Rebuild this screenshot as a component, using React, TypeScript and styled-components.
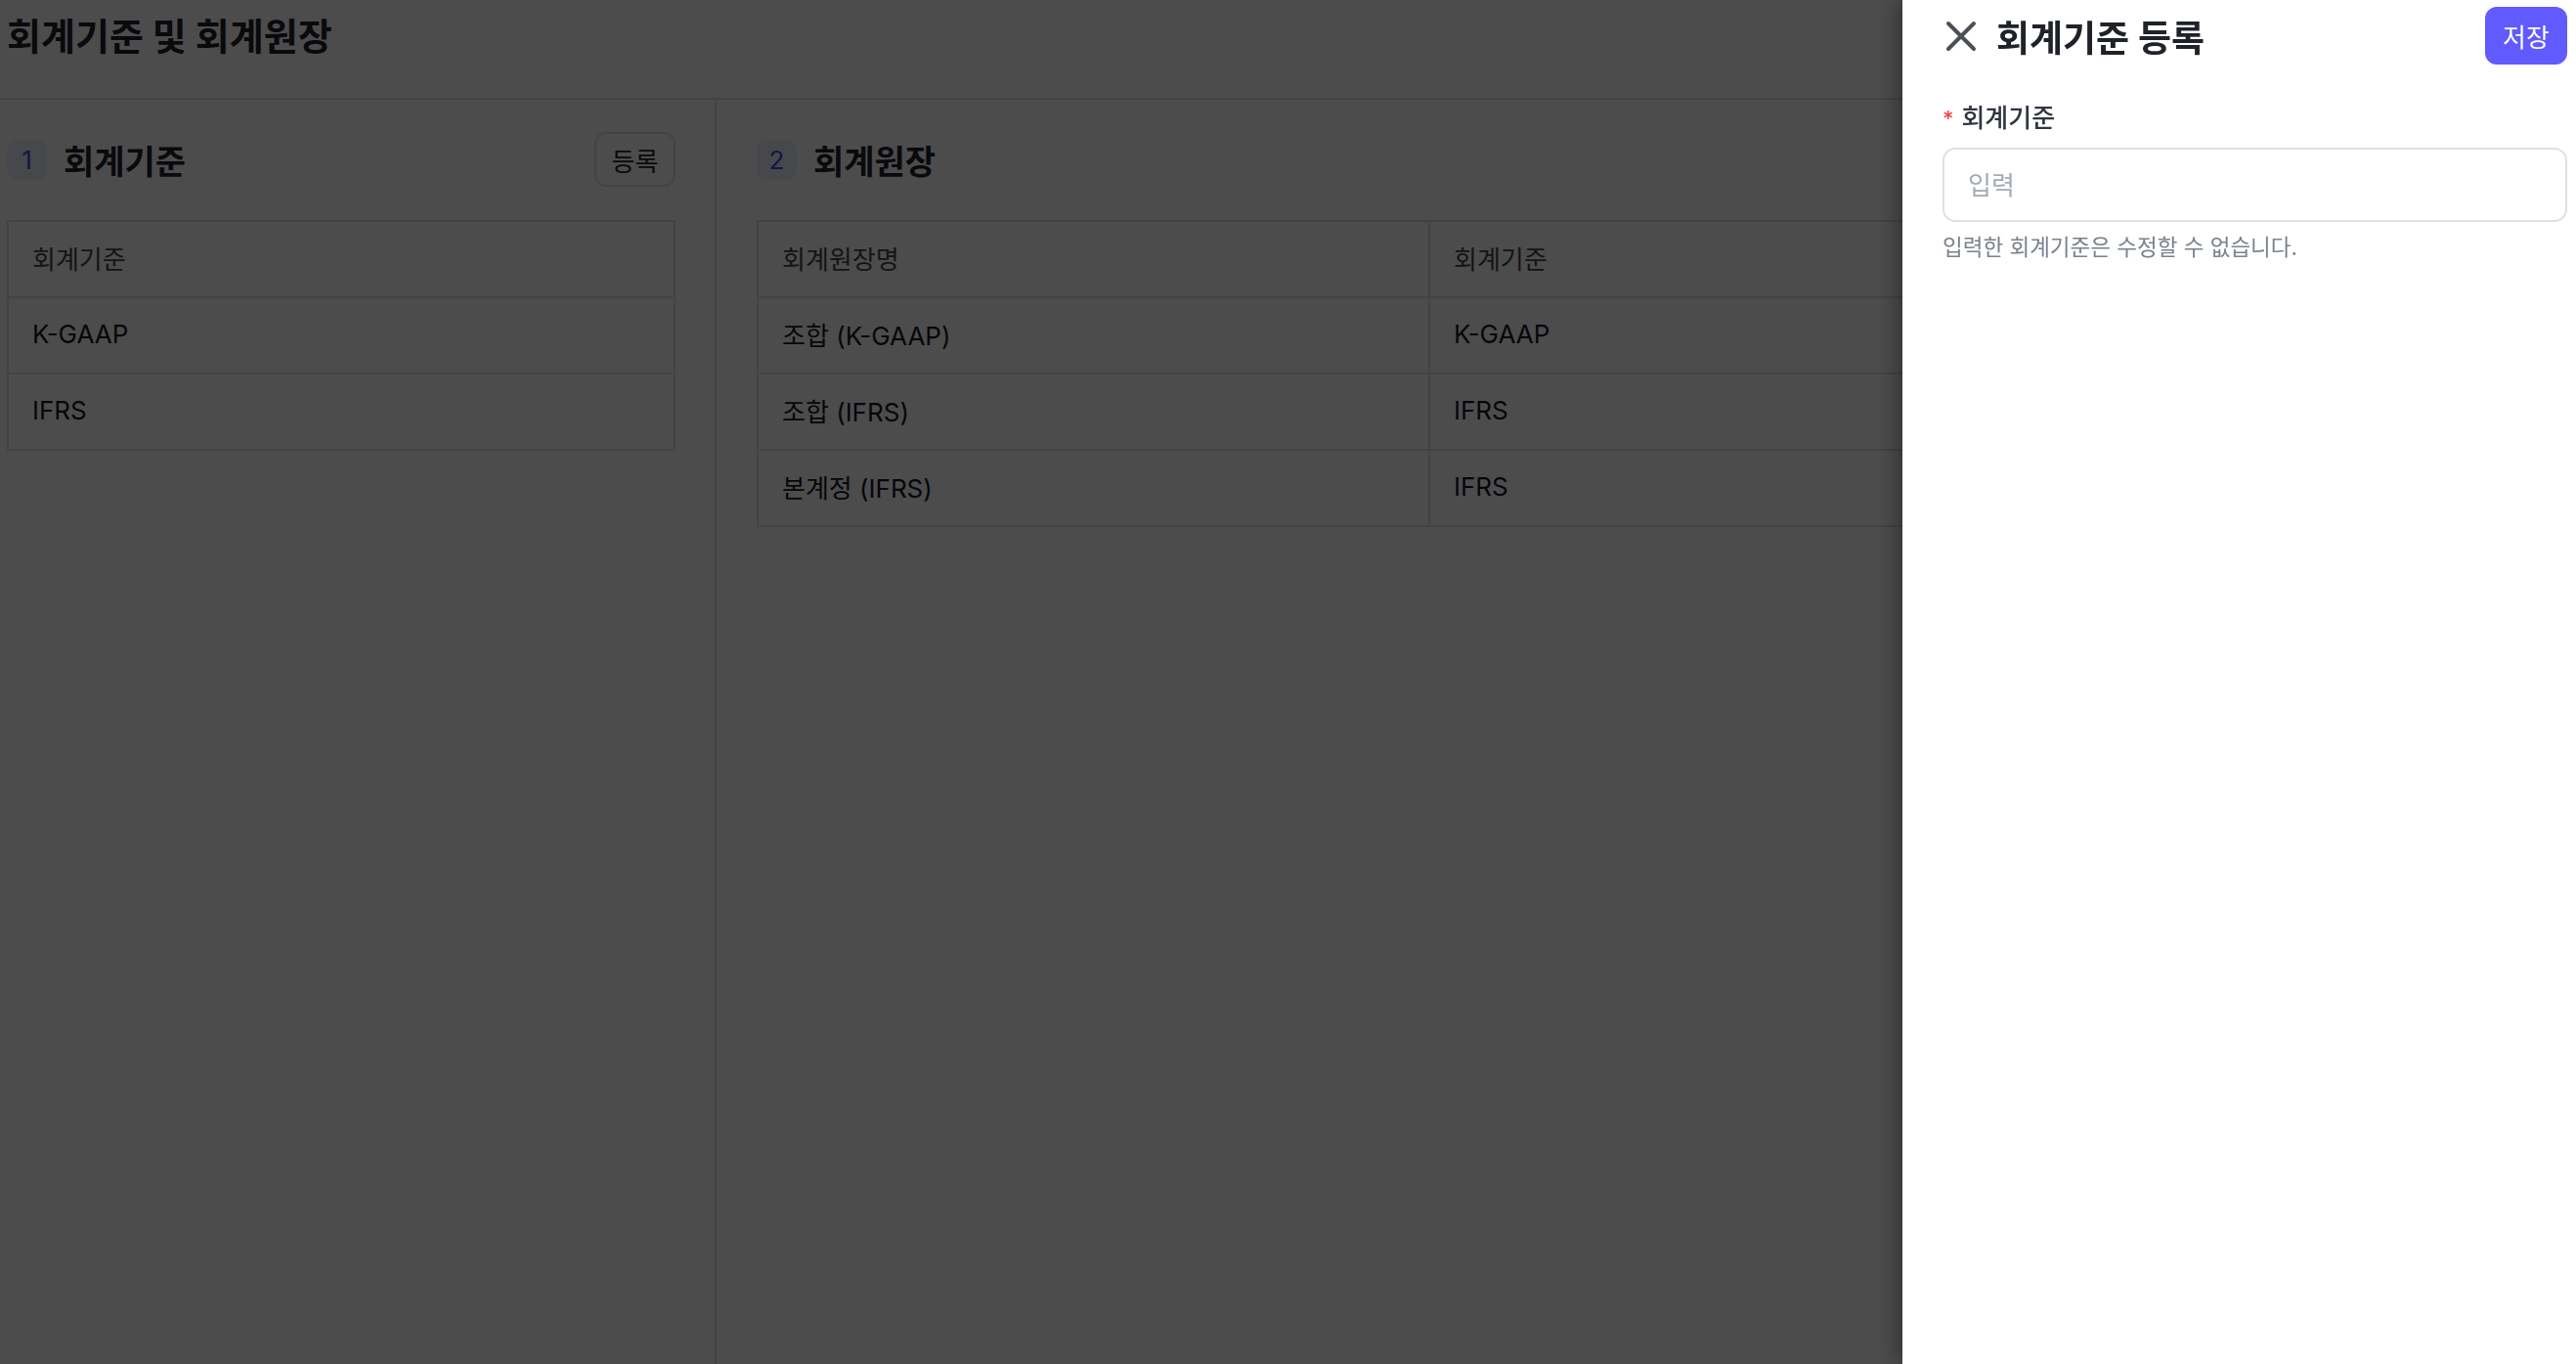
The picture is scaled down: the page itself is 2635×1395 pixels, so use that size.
import * as React from 'react'
import styled, { createGlobalStyle } from 'styled-components'

const GlobalStyle = createGlobalStyle`
  html, body {
    margin: 0;
    padding: 0;
    height: 100%;
    overflow: hidden;
    background: #ffffff;
  }
  body {
    font-family: Inter, 'Noto Sans CJK KR', sans-serif;
    color: #111827;
  }
  * {
    box-sizing: border-box;
  }
`

const Page = styled.div`
  height: 100vh;
  display: flex;
  flex-direction: column;
`

const Header = styled.header`
  height: 102px;
  padding: 15px 7px 0;
  border-bottom: 2px solid #dcdfe4;
  flex-shrink: 0;
`

const PageTitle = styled.h1`
  margin: 0;
  font-size: 38px;
  line-height: 44px;
  font-weight: 700;
  color: #1f2329;
`

const Body = styled.div`
  flex: 1;
  display: flex;
  padding-left: 7px;
`

const Panel = styled.section<{ $first?: boolean; $width?: string }>`
  width: ${p => p.$width || 'auto'};
  flex: ${p => (p.$first ? '0 0 auto' : '1')};
  padding: ${p => (p.$first ? '33px 40px 0 0' : '33px 7px 0 41px')};
  border-right: ${p => (p.$first ? '2px solid #dcdfe4' : 'none')};
`

const PanelHead = styled.div`
  height: 56px;
  display: flex;
  align-items: center;
  justify-content: space-between;
  margin-bottom: 34px;
`

const PanelTitleWrap = styled.div`
  display: flex;
  align-items: center;
  gap: 17px;
`

const Badge = styled.span`
  width: 41px;
  height: 41px;
  border-radius: 10px;
  background: #eef0ff;
  color: #4f46e5;
  font-size: 26px;
  display: flex;
  align-items: center;
  justify-content: center;
`

const PanelTitle = styled.h2`
  margin: 0;
  font-size: 34px;
  font-weight: 700;
  color: #1f2329;
`

const GhostButton = styled.button`
  width: 83px;
  height: 56px;
  border: 2px solid #dcdfe4;
  border-radius: 12px;
  background: #ffffff;
  font-family: inherit;
  font-size: 26px;
  color: #1f2329;
`

const Table = styled.div<{ $cols: string }>`
  display: grid;
  grid-template-columns: ${p => p.$cols};
  border: 2px solid #dcdfe4;
  border-bottom: none;
`

const Cell = styled.div<{ $head?: boolean; $divider?: boolean }>`
  height: 78px;
  display: flex;
  align-items: center;
  padding: 0 0 3px 24px;
  border-bottom: 2px solid #dcdfe4;
  border-right: ${p => (p.$divider ? '2px solid #dcdfe4' : 'none')};
  font-size: 26px;
  color: ${p => (p.$head ? '#3f4650' : '#111827')};
`

const Overlay = styled.div`
  position: fixed;
  inset: 0;
  background: rgba(0, 0, 0, 0.7);
`

const Drawer = styled.aside`
  position: fixed;
  top: 0;
  right: 0;
  width: 689px;
  height: 100vh;
  background: #ffffff;
  padding: 7px 9px 0 41px;
  box-shadow: -6px 0 22px rgba(0, 0, 0, 0.35);
`

const DrawerHead = styled.div`
  height: 59px;
  display: flex;
  align-items: center;
  justify-content: space-between;
`

const DrawerTitleWrap = styled.div`
  display: flex;
  align-items: center;
  gap: 17px;
`

const CloseButton = styled.button`
  width: 38px;
  height: 38px;
  padding: 0;
  border: none;
  background: none;
  display: flex;
  align-items: center;
  justify-content: center;
`

const DrawerTitle = styled.h2`
  margin: 0;
  font-size: 37px;
  font-weight: 700;
  color: #1f2329;
`

const PrimaryButton = styled.button`
  width: 84px;
  height: 59px;
  border: none;
  border-radius: 12px;
  background: #615aff;
  color: #ffffff;
  font-family: inherit;
  font-size: 26px;
`

const Field = styled.div`
  margin-top: 37px;
  display: flex;
  flex-direction: column;
`

const Label = styled.label`
  display: flex;
  align-items: center;
  gap: 8px;
  font-size: 26px;
  line-height: 36px;
  font-weight: 500;
  color: #2f3640;
`

const Required = styled.span`
  color: #ef4444;
  font-size: 22px;
`

const Input = styled.input`
  margin-top: 12px;
  height: 76px;
  width: 100%;
  border: 2px solid #dde1e6;
  border-radius: 13px;
  padding: 0 24px;
  font-family: inherit;
  font-size: 26px;
  color: #111827;
  outline: none;
  &::placeholder {
    color: #a3abb6;
  }
`

const Helper = styled.p`
  margin: 11px 0 0;
  font-size: 22.5px;
  line-height: 30px;
  color: #7a828c;
`

const CloseIcon = () => (
  <svg width="32" height="32" viewBox="0 0 32 32" fill="none">
    <path d="M3 3L29 29M29 3L3 29" stroke="#4b5058" strokeWidth="4" strokeLinecap="round" />
  </svg>
)

const standards = ['K-GAAP', 'IFRS']
const ledgers = [
  { name: '조합 (K-GAAP)', standard: 'K-GAAP' },
  { name: '조합 (IFRS)', standard: 'IFRS' },
  { name: '본계정 (IFRS)', standard: 'IFRS' },
]

export default function App() {
  return (
    <>
      <GlobalStyle />
      <Page>
        <Header>
          <PageTitle>회계기준 및 회계원장</PageTitle>
        </Header>
        <Body>
          <Panel $first $width="726px">
            <PanelHead>
              <PanelTitleWrap>
                <Badge>1</Badge>
                <PanelTitle>회계기준</PanelTitle>
              </PanelTitleWrap>
              <GhostButton>등록</GhostButton>
            </PanelHead>
            <Table $cols="1fr">
              <Cell $head>회계기준</Cell>
              {standards.map(s => (
                <Cell key={s}>{s}</Cell>
              ))}
            </Table>
          </Panel>
          <Panel>
            <PanelHead>
              <PanelTitleWrap>
                <Badge>2</Badge>
                <PanelTitle>회계원장</PanelTitle>
              </PanelTitleWrap>
            </PanelHead>
            <Table $cols="687px 1fr">
              <Cell $head $divider>회계원장명</Cell>
              <Cell $head>회계기준</Cell>
              {ledgers.map(l => (
                <React.Fragment key={l.name}>
                  <Cell $divider>{l.name}</Cell>
                  <Cell>{l.standard}</Cell>
                </React.Fragment>
              ))}
            </Table>
          </Panel>
        </Body>
      </Page>
      <Overlay />
      <Drawer>
        <DrawerHead>
          <DrawerTitleWrap>
            <CloseButton aria-label="닫기">
              <CloseIcon />
            </CloseButton>
            <DrawerTitle>회계기준 등록</DrawerTitle>
          </DrawerTitleWrap>
          <PrimaryButton>저장</PrimaryButton>
        </DrawerHead>
        <Field>
          <Label>
            <Required>*</Required>
            회계기준
          </Label>
          <Input placeholder="입력" />
          <Helper>입력한 회계기준은 수정할 수 없습니다.</Helper>
        </Field>
      </Drawer>
    </>
  )
}
